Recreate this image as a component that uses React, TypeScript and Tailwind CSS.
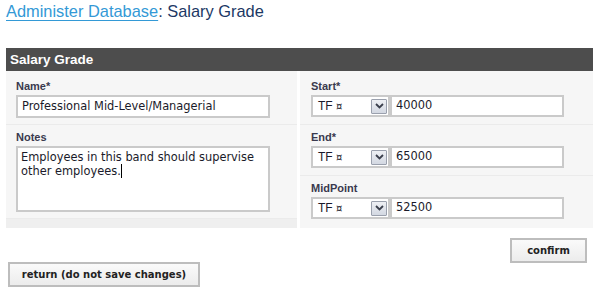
import React from "react";

const V = "font-['DejaVu_Sans',Verdana,sans-serif]";
const L = "font-['Liberation_Sans',Tahoma,Arial,sans-serif] text-[11px] font-bold text-[#3a3a4e] leading-[14px] h-[15px]";

function Chevron() {
  return (
    <div className="w-[16px] h-[15px] border border-[#9aa0ad] bg-gradient-to-b from-[#eef0f4] to-[#d3d8e2] flex items-center justify-center rounded-[1px]">
      <svg width="9" height="6" viewBox="0 0 9 6">
        <path d="M1 1 L4.5 4.5 L8 1" stroke="#3a3f4c" strokeWidth="1.8" fill="none" />
      </svg>
    </div>
  );
}

function MoneyInputs({ value }: { value: string }) {
  return (
    <div className="flex mt-[1px]">
      <div className="w-[79px] h-[22px] border-2 border-[#cacaca] bg-white flex items-center justify-between pl-[5px] pr-[1px]">
        <span className="font-['Liberation_Sans',Arial,sans-serif] text-[12px] text-[#1a1a2a]">
          TF <span className="font-['DejaVu_Sans',sans-serif] text-[10px]">¤</span>
        </span>
        <Chevron />
      </div>
      <div className={`w-[174px] h-[22px] border-2 border-[#cacaca] bg-white flex items-center pl-[4px] ${V} text-[11.4px] text-[#1a1a2a]`}>
        {value}
      </div>
    </div>
  );
}

export default function App() {
  return (
    <div className="w-[597px] h-[299px] bg-white overflow-hidden">
      <div className="pl-[6px] pt-[2px] h-[48px] font-['Liberation_Sans',Arial,sans-serif] text-[16.4px] leading-[19px]">
        <span className="text-[#3399d6] underline decoration-1 underline-offset-[3px]">Administer Database</span>
        <span className="text-[#1c3864]">: Salary Grade</span>
      </div>
      <div className="ml-[6px] w-[587px]">
        <div className="h-[23px] bg-[#4d4d4d] text-white font-bold font-['Liberation_Sans',Tahoma,sans-serif] text-[13.5px] leading-[23px] pl-[4px]">
          Salary Grade
        </div>
        <div className="flex gap-[3px] bg-white">
          <div className="w-[291px] flex flex-col gap-[1px] bg-[#ebebeb]">
            <div className="bg-[#f6f6f6] pl-[10px] pt-[8px] h-[53px]">
              <div className={L}>Name*</div>
              <div className={`mt-[1px] w-[254px] h-[23px] border-2 border-[#cacaca] bg-white flex items-center pl-[4px] ${V} text-[11.4px] text-[#1a1a2a]`}>
                Professional Mid-Level/Managerial
              </div>
            </div>
            <div className="bg-[#f6f6f6] pl-[10px] pt-[5px] h-[93px]">
              <div className={L}>Notes</div>
              <div className={`mt-[1px] w-[254px] h-[66px] border-2 border-[#cacaca] bg-white pl-[3px] pt-[2px] ${V} text-[11.4px] leading-[14px] text-[#1a1a2a]`}>
                Employees in this band should supervise
                <br />
                other employees.<span className="inline-block w-[1px] h-[14px] bg-black align-[-3px]" />
              </div>
            </div>
            <div className="bg-[#efefef] h-[9px]" />
          </div>
          <div className="w-[293px] flex flex-col gap-[1px] bg-[#ebebeb]">
            <div className="bg-[#f6f6f6] pl-[11px] pt-[8px] h-[53px]">
              <div className={L}>Start*</div>
              <MoneyInputs value="40000" />
            </div>
            <div className="bg-[#f6f6f6] pl-[11px] pt-[5px] h-[50px]">
              <div className={L}>End*</div>
              <MoneyInputs value="65000" />
            </div>
            <div className="bg-[#f6f6f6] pl-[11px] pt-[5px] h-[52px]">
              <div className={L}>MidPoint</div>
              <MoneyInputs value="52500" />
            </div>
          </div>
        </div>
      </div>
      <div className="flex justify-end pr-[10px] mt-[10px]">
        <div className={`w-[77px] h-[25px] border-2 border-[#bdbdbd] bg-gradient-to-b from-[#fafafa] to-[#ececec] flex items-center justify-center ${V} text-[10px] font-bold text-[#222]`}>
          confirm
        </div>
      </div>
      <div className="pl-[8px] -mt-[1px]">
        <div className={`w-[192px] h-[25px] border-2 border-[#bdbdbd] bg-gradient-to-b from-[#fafafa] to-[#ececec] flex items-center justify-center ${V} text-[10px] font-bold text-[#222]`}>
          return (do not save changes)
        </div>
      </div>
    </div>
  );
}
